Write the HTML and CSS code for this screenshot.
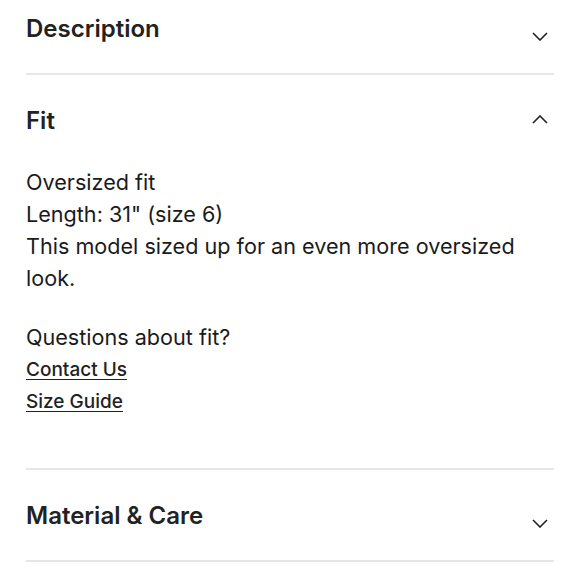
FILE: index.html
```html
<!DOCTYPE html>
<html lang="en">
<head>
    <meta charset="UTF-8">
    <meta name="viewport" content="width=device-width, initial-scale=1.0">
    <title>Product details</title>
    <link rel="stylesheet" href="styles.css">
</head>
<body>
    <div class="accordion">
        <section class="panel">
            <div class="panel-head">
                <h2>Description</h2>
                <svg class="chevron down" width="16" height="9" viewBox="0 0 16 9"><path d="M1 1l7 7 7-7" fill="none" stroke="#222" stroke-width="1.6"/></svg>
            </div>
        </section>
        <section class="panel open">
            <div class="panel-head">
                <h2>Fit</h2>
                <svg class="chevron up" width="16" height="9" viewBox="0 0 16 9"><path d="M1 8l7-7 7 7" fill="none" stroke="#222" stroke-width="1.6"/></svg>
            </div>
            <div class="panel-body">
                <p>Oversized fit<br>Length: 31" (size 6)<br>This model sized up for an even more oversized look.</p>
                <p class="questions">Questions about fit?</p>
                <a href="#">Contact Us</a>
                <a href="#">Size Guide</a>
            </div>
        </section>
        <section class="panel">
            <div class="panel-head">
                <h2>Material &amp; Care</h2>
                <svg class="chevron down" width="16" height="9" viewBox="0 0 16 9"><path d="M1 1l7 7 7-7" fill="none" stroke="#222" stroke-width="1.6"/></svg>
            </div>
        </section>
    </div>
</body>
</html>
```

FILE: styles.css
```css
body {
    margin: 0;
    background-color: #ffffff;
    color: #1b1b1b;
    font-family: Inter, "Noto Sans", sans-serif;
}
.accordion {
    margin: -17px 26px 0 26px;
}
.panel {
    border-bottom: 2px solid #e6e6e6;
}
.panel-head {
    height: 90px;
    display: flex;
    align-items: center;
    justify-content: space-between;
    padding-right: 6px;
}
.panel-head h2 {
    margin: 0;
    font-size: 24px;
    font-weight: 600;
    color: #222222;
}
.chevron.down {
    margin-top: 17px;
}
.chevron.up {
    margin-top: -2px;
}
.panel-body {
    padding: 1px 0 50px 0;
    font-size: 21.6px;
    line-height: 32px;
}
.panel-body p {
    margin: 0 0 27px 0;
}
.panel-body .questions {
    margin: 0 0 1px 0;
}
.panel-body a {
    display: block;
    color: #222222;
    font-size: 19px;
    font-weight: 500;
    text-decoration: underline;
    text-underline-offset: 3px;
}
```
